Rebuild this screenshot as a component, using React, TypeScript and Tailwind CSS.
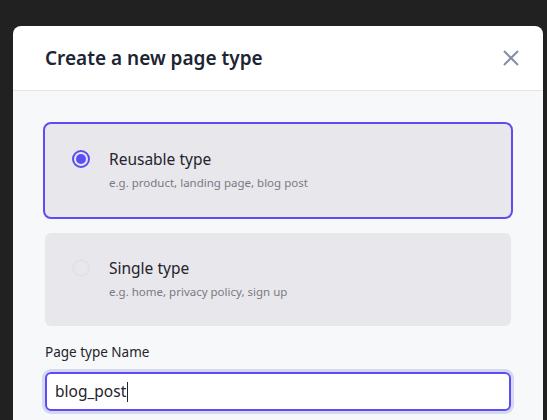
import React from 'react';

const FONT = "font-['Noto_Sans',sans-serif]";

function TypeCard({
  title,
  hint,
  selected,
}: {
  title: string;
  hint: string;
  selected?: boolean;
}) {
  return (
    <div
      className={`flex h-[93px] items-start gap-[19px] rounded-md bg-[#e8e7ec] pl-[27px] pt-[23px] ${
        selected ? 'outline-2 outline-[#5b4cf5]' : ''
      }`}
    >
      <div className="flex h-6 items-center">
        {selected ? (
          <span className="flex h-[18px] w-[18px] items-center justify-center rounded-full border-2 border-[#5b4cf5]">
            <span className="h-[10px] w-[10px] rounded-full bg-[#5b4cf5]" />
          </span>
        ) : (
          <span className="h-[18px] w-[18px] rounded-full border-2 border-[#e2e1e6]" />
        )}
      </div>
      <div className="flex flex-col">
        <span className="text-[15.5px] leading-6 text-[#25232c]">{title}</span>
        <span className="mt-1 text-[11.5px] leading-4 text-[#7a7982]">{hint}</span>
      </div>
    </div>
  );
}

export default function App() {
  return (
    <div className={`h-[420px] w-[547px] overflow-hidden bg-[#212121] pl-[13px] pt-[26px] ${FONT}`}>
      <div className="w-[530px] rounded-t-lg bg-white">
        {/* Header */}
        <div className="flex h-[65px] items-center justify-between border-b border-[#e3e5e9] pl-8 pr-4">
          <h2 className="text-[19px] font-semibold text-[#1d2433]">Create a new page type</h2>
          <button className="flex h-8 w-8 items-center justify-center text-[#8190a5]">
            <svg width="16" height="16" viewBox="0 0 16 16" fill="none" stroke="currentColor" strokeWidth="2">
              <path d="M1 1l14 14M15 1L1 15" />
            </svg>
          </button>
        </div>

        {/* Body */}
        <div className="h-[330px] bg-[#f7f8fa] px-8 pt-[33px]">
          <div className="flex flex-col gap-4">
            <TypeCard selected title="Reusable type" hint="e.g. product, landing page, blog post" />
            <TypeCard title="Single type" hint="e.g. home, privacy policy, sign up" />
          </div>

          <label className="mt-4 block text-[13.5px] leading-5 text-[#25232c]">Page type Name</label>
          <div className="mt-[10px] rounded-md ring-[3px] ring-[#d5d8ef]">
            <div className="flex h-[39px] items-center rounded-md border-2 border-[#5b4cf5] bg-white px-2 text-[15.5px] text-[#25232c]">
              blog_post<span className="ml-px h-5 w-px bg-[#25232c]" />
            </div>
          </div>
          <p className="mt-[6px] text-sm text-[#e0502d]">Page type name is already taken</p>
        </div>
      </div>
    </div>
  );
}
